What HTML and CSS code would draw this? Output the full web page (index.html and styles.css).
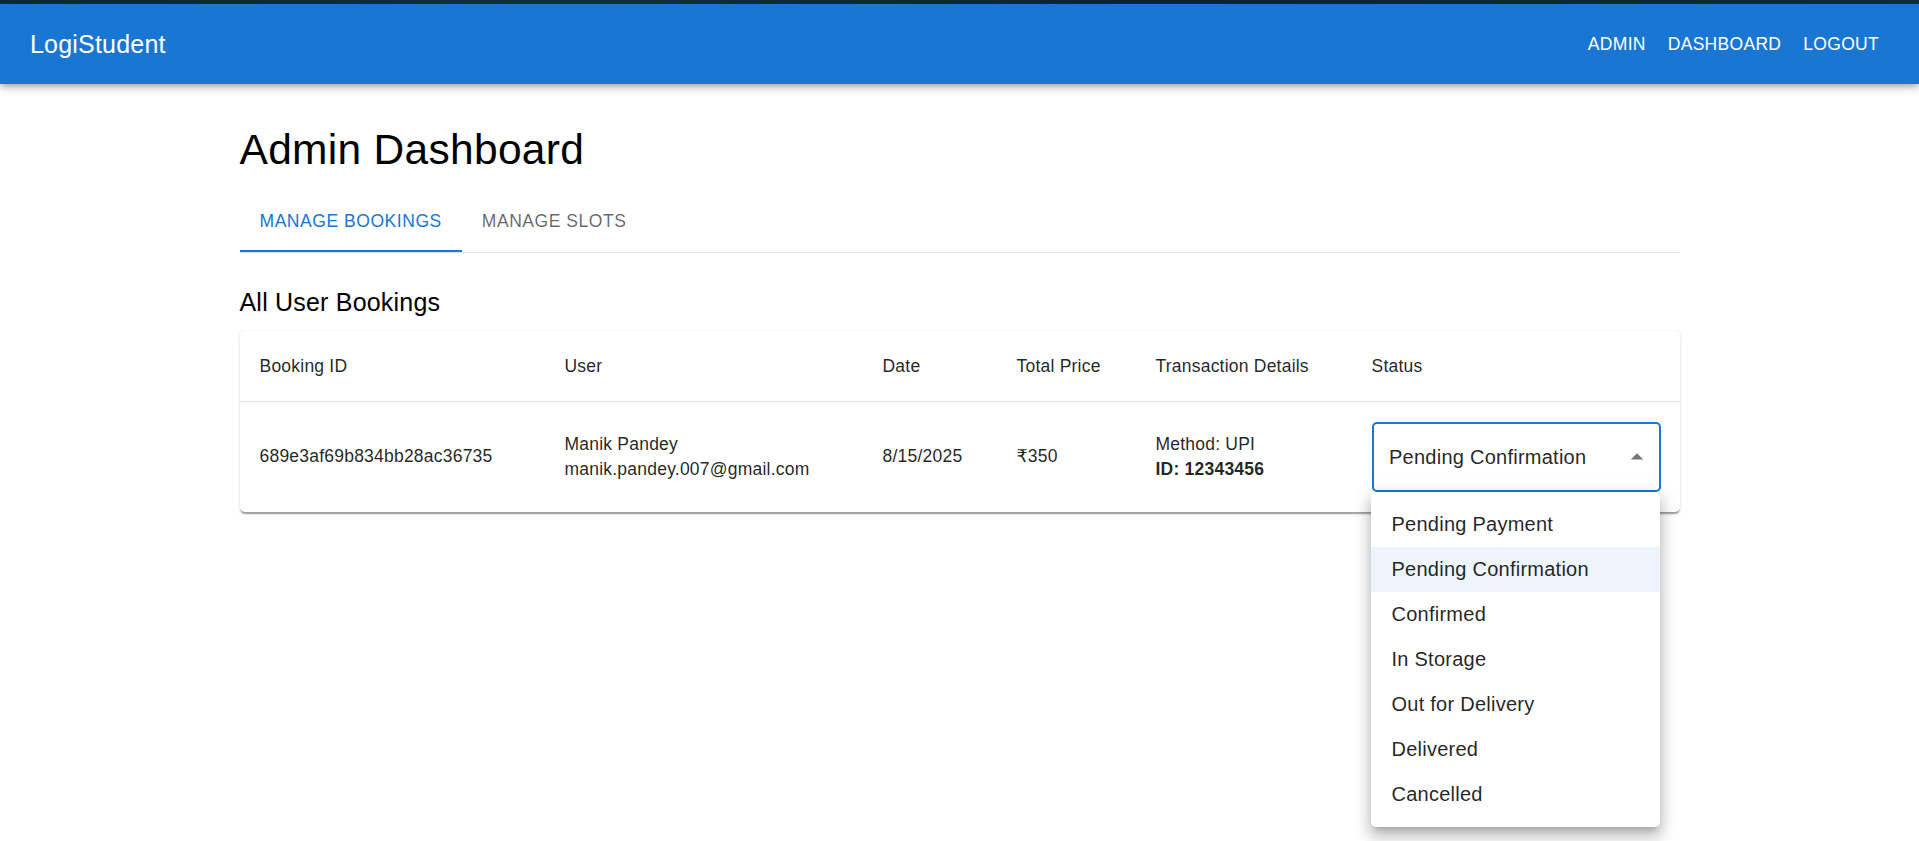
FILE: index.html
```html
<!DOCTYPE html>
<html lang="en">
<head>
<meta charset="utf-8">
<title>LogiStudent - Admin Dashboard</title>
<link rel="stylesheet" href="styles.css">
</head>
<body>
<div class="topstrip"></div>
<header class="appbar">
  <div class="brand">LogiStudent</div>
  <nav class="nav">
    <a class="nav-btn">ADMIN</a>
    <a class="nav-btn">DASHBOARD</a>
    <a class="nav-btn">LOGOUT</a>
  </nav>
</header>
<main class="container">
  <h1 class="page-title">Admin Dashboard</h1>
  <div class="tabs">
    <div class="tab tab-active">MANAGE BOOKINGS</div>
    <div class="tab">MANAGE SLOTS</div>
  </div>
  <h2 class="section-title">All User Bookings</h2>
  <div class="card">
    <table class="table">
      <colgroup>
        <col class="c1"><col class="c2"><col class="c3"><col class="c4"><col class="c5"><col class="c6">
      </colgroup>
      <thead>
        <tr>
          <th>Booking ID</th>
          <th>User</th>
          <th>Date</th>
          <th>Total Price</th>
          <th>Transaction Details</th>
          <th>Status</th>
        </tr>
      </thead>
      <tbody>
        <tr>
          <td>689e3af69b834bb28ac36735</td>
          <td>Manik Pandey<br>manik.pandey.007@gmail.com</td>
          <td>8/15/2025</td>
          <td>₹350</td>
          <td>Method: UPI<br><strong>ID: 12343456</strong></td>
          <td>
            <div class="select">
              <span class="select-value">Pending Confirmation</span>
              <svg class="select-icon" viewBox="0 0 24 24" width="30" height="30"><path d="M7 14l5-5 5 5z" fill="rgba(0,0,0,0.54)"/></svg>
            </div>
          </td>
        </tr>
      </tbody>
    </table>
    <ul class="menu">
      <li class="menu-item">Pending Payment</li>
      <li class="menu-item menu-item-selected">Pending Confirmation</li>
      <li class="menu-item">Confirmed</li>
      <li class="menu-item">In Storage</li>
      <li class="menu-item">Out for Delivery</li>
      <li class="menu-item">Delivered</li>
      <li class="menu-item">Cancelled</li>
    </ul>
  </div>
</main>
</body>
</html>
```
FILE: styles.css
```css
* { box-sizing: border-box; }
html, body { margin: 0; padding: 0; }
body {
  font-family: "Liberation Sans", Arial, "DejaVu Sans", sans-serif;
  background: #fff;
  color: rgba(0,0,0,0.87);
  min-height: 841px;
}
.topstrip {
  height: 4px;
  background: linear-gradient(90deg, #0a2a33 0%, #0d3440 30%, #0a2630 60%, #0c3038 100%);
}
.appbar {
  height: 80px;
  background: #1976d2;
  color: #fff;
  display: flex;
  align-items: center;
  justify-content: space-between;
  padding: 0 30px;
  box-shadow: 0px 2.5px 5px -1.25px rgba(0,0,0,0.2), 0px 5px 6px 0px rgba(0,0,0,0.14), 0px 1.25px 12.5px 0px rgba(0,0,0,0.12);
  position: relative;
  z-index: 2;
}
.brand {
  font-size: 25px;
  line-height: 40px;
  letter-spacing: 0.2px;
}
.nav { display: flex; gap: 2px; }
.nav-btn {
  font-size: 17.5px;
  line-height: 27px;
  padding: 7.5px 10px;
  letter-spacing: 0.3px;
  color: #fff;
}
.container {
  width: 1440px;
  margin: 40px auto 0;
}
.page-title {
  font-size: 42.5px;
  font-weight: 400;
  line-height: 52.5px;
  letter-spacing: 0.3px;
  margin: 0 0 15px;
  color: #000;
}
.tabs {
  display: flex;
  border-bottom: 1px solid #e0e0e0;
  height: 61px;
}
.tab {
  height: 60px;
  padding: 0 20px;
  display: flex;
  align-items: center;
  font-size: 17.5px;
  letter-spacing: 0.55px;
  color: rgba(0,0,0,0.6);
}
.tab-active {
  color: #1976d2;
  border-bottom: 2.5px solid #1976d2;
  padding-top: 2.5px;
}
.section-title {
  font-size: 25px;
  font-weight: 400;
  line-height: 40px;
  letter-spacing: 0.2px;
  margin: 29px 0 9px;
  color: #000;
}
.card {
  position: relative;
  background: #fff;
  border-radius: 5px;
  box-shadow: 0px 2.5px 1.25px -1.25px rgba(0,0,0,0.2), 0px 1.25px 1.25px 0px rgba(0,0,0,0.14), 0px 1.25px 3.75px 0px rgba(0,0,0,0.12);
}
.table {
  width: 100%;
  border-collapse: collapse;
  table-layout: fixed;
}
.c1 { width: 305px; }
.c2 { width: 318px; }
.c3 { width: 134px; }
.c4 { width: 139px; }
.c5 { width: 216px; }
.c6 { width: 328px; }
.table th, .table td {
  text-align: left;
  font-size: 17.5px;
  padding: 20px;
  color: rgba(0,0,0,0.87);
  vertical-align: middle;
  letter-spacing: 0.22px;
}
.table th {
  font-weight: 400;
  line-height: 30px;
  border-bottom: 1px solid #e0e0e0;
}
.table td {
  line-height: 25px;
}
.table td strong { font-weight: 700; }
.select {
  width: 289px;
  height: 70px;
  border: 2px solid #1976d2;
  border-radius: 5px;
  display: flex;
  align-items: center;
  justify-content: space-between;
  padding: 0 7px 0 15.5px;
}
.select-value {
  font-size: 20px;
  line-height: 24px;
  letter-spacing: 0.25px;
  color: rgba(0,0,0,0.87);
}
.select-icon { display: block; }
.menu {
  position: absolute;
  top: 161px;
  left: 1131px;
  width: 289px;
  margin: 0;
  padding: 10px 0;
  list-style: none;
  background: #fff;
  border-radius: 5px;
  box-shadow: 0px 6px 6px -4px rgba(0,0,0,0.2), 0px 10px 12.5px 1.25px rgba(0,0,0,0.14), 0px 3.75px 17.5px 2.5px rgba(0,0,0,0.12);
  z-index: 5;
}
.menu-item {
  height: 45px;
  padding: 0 20px 0 21px;
  display: flex;
  align-items: center;
  font-size: 20px;
  letter-spacing: 0.25px;
  color: rgba(0,0,0,0.87);
}
.menu-item-selected {
  background: rgba(25,118,210,0.08);
}
```
